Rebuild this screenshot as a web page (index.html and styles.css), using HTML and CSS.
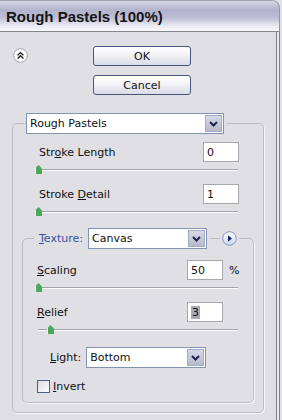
FILE: index.html
```html
<!DOCTYPE html>
<html lang="en">
<head>
    <meta charset="UTF-8">
    <meta name="viewport" content="width=device-width, initial-scale=1.0">
    <title>Rough Pastels</title>
    <link rel="stylesheet" href="styles.css">
</head>
<body>
    <div class="window">
        <div class="titlebar">Rough Pastels (100%)</div>
        <div class="panel">
            <div class="top">
                <span class="collapse">
                    <svg width="15" height="15" viewBox="0 0 15 15">
                        <circle cx="7.5" cy="7.5" r="6.8" fill="#fff" stroke="#a4a4b0"/>
                        <polyline points="4.6,7.2 7.5,4.6 10.4,7.2" fill="none" stroke="#1c1c1c" stroke-width="1.4"/>
                        <polyline points="4.6,10.4 7.5,7.8 10.4,10.4" fill="none" stroke="#1c1c1c" stroke-width="1.4"/>
                    </svg>
                </span>
                <div class="actions">
                    <button class="btn">OK</button>
                    <button class="btn">Cancel</button>
                </div>
            </div>

            <fieldset class="group outer">
                <legend class="head-main">
                    <div class="select filter-select">
                        <span class="select-text">Rough Pastels</span>
                        <span class="arrow"><svg width="9" height="6" viewBox="0 0 9 6"><polyline points="1,1 4.5,4.5 8,1" fill="none" stroke="#1e2450" stroke-width="2"/></svg></span>
                    </div>
                </legend>

                <div class="field">
                    <span class="label">Str<u>o</u>ke Length</span>
                    <span class="num">0</span>
                </div>
                <div class="slider"><span class="thumb" style="left: 0px"></span></div>

                <div class="field">
                    <span class="label">Stroke <u>D</u>etail</span>
                    <span class="num">1</span>
                </div>
                <div class="slider"><span class="thumb" style="left: 0px"></span></div>

                <fieldset class="group inner">
                    <legend class="head-texture">
                        <span class="texture-label"><u>T</u>exture:</span>
                        <div class="select texture-select">
                            <span class="select-text">Canvas</span>
                            <span class="arrow"><svg width="9" height="6" viewBox="0 0 9 6"><polyline points="1,1 4.5,4.5 8,1" fill="none" stroke="#1e2450" stroke-width="2"/></svg></span>
                        </div>
                        <span class="seg"></span>
                        <span class="load">
                            <svg width="15" height="15" viewBox="0 0 15 15">
                                <defs>
                                    <linearGradient id="lg" x1="0" y1="0" x2="0" y2="1">
                                        <stop offset="0" stop-color="#ffffff"/>
                                        <stop offset="1" stop-color="#c9d3ea"/>
                                    </linearGradient>
                                </defs>
                                <circle cx="7.5" cy="7.5" r="6.8" fill="url(#lg)" stroke="#8496c4"/>
                                <polygon points="6,4.2 10,7.5 6,10.8" fill="#1a2470"/>
                            </svg>
                        </span>
                    </legend>

                    <div class="field unit-row">
                        <span class="label"><u>S</u>caling</span>
                        <span class="num">50</span>
                        <span class="unit">%</span>
                    </div>
                    <div class="slider"><span class="thumb" style="left: 0px"></span></div>

                    <div class="field unit-row">
                        <span class="label"><u>R</u>elief</span>
                        <span class="num"><span class="sel">3</span></span>
                        <span class="unit"></span>
                    </div>
                    <div class="slider"><span class="thumb" style="left: 12px"></span></div>

                    <div class="light-row">
                        <span class="light-label"><u>L</u>ight:</span>
                        <div class="select light-select">
                            <span class="select-text">Bottom</span>
                            <span class="arrow"><svg width="9" height="6" viewBox="0 0 9 6"><polyline points="1,1 4.5,4.5 8,1" fill="none" stroke="#1e2450" stroke-width="2"/></svg></span>
                        </div>
                    </div>

                    <div class="check-row">
                        <span class="box"></span>
                        <span><u>I</u>nvert</span>
                    </div>
                </fieldset>
            </fieldset>
        </div>
    </div>
</body>
</html>
```

FILE: styles.css
```css
body {
    margin: 0;
    padding: 0;
    background-color: #e2e1e6;
    font-family: "DejaVu Sans", sans-serif;
    font-size: 11px;
    color: #111;
}
.window {
    width: 282px;
    height: 420px;
    overflow: hidden;
}
.titlebar {
    width: 273px;
    height: 30px;
    padding-left: 6px;
    display: flex;
    align-items: center;
    font-family: "Liberation Sans", sans-serif;
    font-weight: bold;
    font-size: 15px;
    color: #141414;
    border-top: 1px solid #a2a2b4;
    border-right: 1px solid #9494a8;
    border-bottom: 1px solid #85858f;
    border-top-right-radius: 8px;
    background: linear-gradient(#d6d6e4 0%, #b3b3cd 30%, #bcbcd4 55%, #e6e6f0 80%, #fafafc 100%);
}
.panel {
    width: 276px;
    height: 388px;
    background-color: #e0dfe4;
    border-right: 1px solid #7e7e8c;
    box-shadow: 2px 0 0 #e9e9ee, 3px 0 0 #7e7e8c;
}
.top {
    display: flex;
    align-items: flex-start;
    padding-top: 14px;
}
.collapse {
    display: block;
    width: 15px;
    height: 15px;
    margin-left: 13px;
    margin-top: 2px;
}
.collapse svg, .load svg {
    display: block;
}
.actions {
    display: flex;
    flex-direction: column;
    gap: 9px;
    margin-left: 65px;
}
.btn {
    width: 98px;
    height: 20px;
    padding: 0;
    font-family: "DejaVu Sans", sans-serif;
    font-size: 11px;
    color: #111;
    border: 1px solid #47577f;
    border-radius: 3px;
    background: linear-gradient(#ffffff 0%, #f3f3f7 45%, #d9dce8 100%);
}

/* group boxes */
.group {
    margin: 0;
    border: 1px solid #bcbcc3;
    border-radius: 5px;
    box-shadow: 1px 1px 0 #f8f8fa;
    min-inline-size: 0;
}
.outer {
    width: 252px;
    box-sizing: border-box;
    margin: 18px 0 0 12px;
    padding: 8px 9px 9px 9px;
}
.inner {
    margin-top: 2px;
    padding: 11px 6px 9px 14px;
}
.head-main {
    margin-left: 4px;
    padding: 0 3px 0 0;
}
.head-texture {
    display: flex;
    align-items: center;
    margin-left: -3px;
    padding: 0 2px 0 5px;
}
.texture-label {
    color: #3550a6;
    margin-right: 5px;
}
.seg {
    display: block;
    width: 10px;
    height: 1px;
    margin: 0 2px 0 3px;
    background-color: #bcbcc3;
}
.load {
    display: block;
    width: 15px;
    height: 15px;
}

/* selects */
.select {
    box-sizing: border-box;
    height: 21px;
    display: flex;
    align-items: stretch;
    background-color: #fff;
    border: 1px solid #8593b2;
}
.select-text {
    flex: 1;
    display: flex;
    align-items: center;
    padding-left: 3px;
    color: #111;
}
.arrow {
    width: 15px;
    margin: 1px;
    display: flex;
    align-items: center;
    justify-content: center;
    border: 1px solid #a4aac0;
    background: linear-gradient(#d6dae6, #b5bacb);
}
.filter-select {
    width: 198px;
}
.texture-select {
    width: 119px;
}
.light-select {
    width: 120px;
}

/* value rows */
.field {
    display: flex;
    align-items: center;
    height: 20px;
    padding: 0 15px 0 17px;
}
.label {
    flex: 1;
}
.num {
    box-sizing: border-box;
    width: 36px;
    height: 20px;
    padding-left: 3px;
    display: flex;
    align-items: center;
    background-color: #fff;
    border: 1px solid #a7a7b0;
}
.sel {
    background-color: #a8a8b8;
    padding: 0 1px;
}
.unit-row {
    padding: 0;
}
.unit {
    width: 24px;
    padding-left: 6px;
    box-sizing: border-box;
}

/* sliders */
.slider {
    position: relative;
    width: 203px;
    height: 22px;
    margin-left: 13px;
}
.inner .slider {
    margin-left: -2px;
}
.slider::before {
    content: "";
    position: absolute;
    left: 3px;
    right: 0;
    top: 7px;
    height: 1px;
    background-color: #a2a2aa;
    border-bottom: 1px solid #fbfbfc;
}
.thumb {
    position: absolute;
    top: 3px;
    width: 7px;
    height: 9px;
    background: linear-gradient(90deg, #e8f6ea 0, #e8f6ea 1px, #4aa85a 1px);
    clip-path: polygon(50% 0, 100% 40%, 100% 100%, 0 100%, 0 40%);
}

.light-row {
    display: flex;
    align-items: center;
    gap: 5px;
    margin-top: 3px;
    padding-left: 13px;
}
.check-row {
    display: flex;
    align-items: center;
    gap: 3px;
    margin-top: 12px;
}
.box {
    box-sizing: border-box;
    width: 13px;
    height: 13px;
    border: 1px solid #4f5f80;
    background: linear-gradient(135deg, #dcdce4, #ffffff);
}
```
